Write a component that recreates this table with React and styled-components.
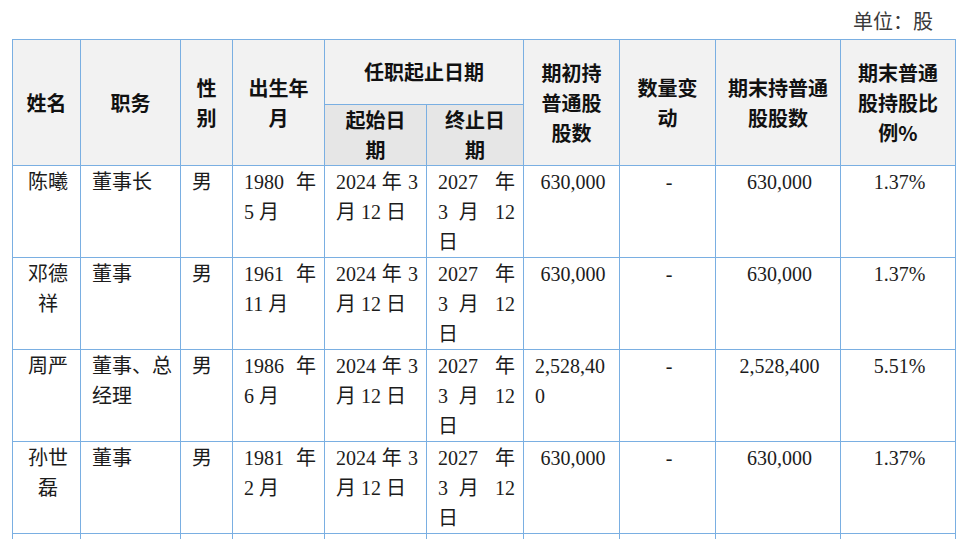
import React from "react";
import styled, { createGlobalStyle } from "styled-components";

const GlobalStyle = createGlobalStyle`
  html, body { margin: 0; padding: 0; background: #ffffff; }
  body { overflow: hidden; }
`;

const Page = styled.div`
  width: 960px;
  height: 539px;
  overflow: hidden;
  box-sizing: border-box;
  padding: 6px 0 0 12px;
  font-family: "Liberation Serif", "Noto Sans CJK SC", serif;
`;

const Unit = styled.div`
  width: 943px;
  height: 33px;
  line-height: 33px;
  box-sizing: border-box;
  padding-right: 22px;
  text-align: right;
  font-size: 20px;
  color: #3a3a3a;
`;

const Table = styled.table`
  width: 943px;
  table-layout: fixed;
  border-collapse: collapse;
  font-size: 20px;
  color: #1c1c1c;
`;

const HeadRow = styled.tr`
  height: ${(p) => p.$h}px;
`;

const Th = styled.th`
  border: 1px solid #7aafe2;
  background: ${(p) => (p.$sub ? "#e6e6e6" : "#f2f2f2")};
  font-family: "Noto Sans CJK SC", sans-serif;
  font-weight: 700;
  font-size: 20px;
  line-height: 30px;
  color: #111;
  text-align: center;
  vertical-align: middle;
  padding: 0 12px;
  box-sizing: border-box;
`;

const Td = styled.td`
  border: 1px solid #7aafe2;
  vertical-align: top;
  line-height: 30px;
  padding: 1px 8px 0 11px;
  text-align: ${(p) => p.$align || "justify"};
  word-break: ${(p) => (p.$breakAll ? "break-all" : "normal")};
  box-sizing: border-box;
`;

const widths = [68, 100, 52, 92, 102, 97, 96, 96, 125, 115];

const rows = [
  { name: "陈曦", role: "董事长", sex: "男", birth: "1980 年 5 月", begin: "630,000", end: "630,000", ratio: "1.37%" },
  { name: "邓德祥", role: "董事", sex: "男", birth: "1961 年 11 月", begin: "630,000", end: "630,000", ratio: "1.37%" },
  { name: "周严", role: "董事、总经理", sex: "男", birth: "1986 年 6 月", begin: "2,528,400", end: "2,528,400", ratio: "5.51%", wrapBegin: true },
  { name: "孙世磊", role: "董事", sex: "男", birth: "1981 年 2 月", begin: "630,000", end: "630,000", ratio: "1.37%" },
  { name: "李明", role: "董事、副总经理", sex: "男", birth: "1983 年 7 月", begin: "630,000", end: "630,000", ratio: "1.37%" },
];

export default function App() {
  return (
    <>
      <GlobalStyle />
      <Page>
        <Unit>单位：股</Unit>
        <Table>
          <colgroup>
            {widths.map((w, i) => (
              <col key={i} style={{ width: w }} />
            ))}
          </colgroup>
          <thead>
            <HeadRow $h={65}>
              <Th rowSpan={2}>姓名</Th>
              <Th rowSpan={2}>职务</Th>
              <Th rowSpan={2}>性别</Th>
              <Th rowSpan={2}>出生年月</Th>
              <Th colSpan={2}>任职起止日期</Th>
              <Th rowSpan={2}>期初持普通股股数</Th>
              <Th rowSpan={2}>数量变动</Th>
              <Th rowSpan={2}>期末持普通股股数</Th>
              <Th rowSpan={2}>期末普通股持股比例%</Th>
            </HeadRow>
            <HeadRow $h={59}>
              <Th $sub>起始日期</Th>
              <Th $sub>终止日期</Th>
            </HeadRow>
          </thead>
          <tbody>
            {rows.map((r) => (
              <tr key={r.name}>
                <Td $align="center">{r.name}</Td>
                <Td>{r.role}</Td>
                <Td $align="left">{r.sex}</Td>
                <Td>{r.birth}</Td>
                <Td>2024 年 3 月 12 日</Td>
                <Td>2027 年 3 月 12 日</Td>
                <Td $align={r.wrapBegin ? "left" : "center"} $breakAll={r.wrapBegin}>
                  {r.begin}
                </Td>
                <Td $align="center">-</Td>
                <Td $align="center">{r.end}</Td>
                <Td $align="center">{r.ratio}</Td>
              </tr>
            ))}
          </tbody>
        </Table>
      </Page>
    </>
  );
}
